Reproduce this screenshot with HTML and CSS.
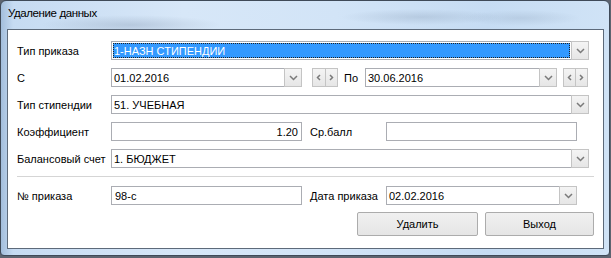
FILE: index.html
```html
<!DOCTYPE html>
<html lang="ru">
<head>
  <meta charset="UTF-8">
  <title>Удаление данных</title>
  <link rel="stylesheet" href="styles.css">
</head>
<body>
  <div class="window">
    <div class="caption">Удаление данных</div>
    <div class="client">
      <div class="row">
        <span class="lbl">Тип приказа</span>
        <div class="combo full focused">
          <span class="value"><span class="sel">1-НАЗН СТИПЕНДИИ</span></span>
          <span class="drop"><svg width="9" height="6" viewBox="0 0 9 6"><polyline points="1,1 4.5,4.5 8,1" /></svg></span>
        </div>
      </div>

      <div class="row">
        <span class="lbl">С</span>
        <div class="combo half">
          <span class="value">01.02.2016</span>
          <span class="drop"><svg width="9" height="6" viewBox="0 0 9 6"><polyline points="1,1 4.5,4.5 8,1" /></svg></span>
        </div>
        <div class="spin first">
          <span class="arr"><svg width="5" height="7" viewBox="0 0 5 7"><polyline points="4,1 1.5,3.5 4,6" /></svg></span>
          <span class="arr"><svg width="5" height="7" viewBox="0 0 5 7"><polyline points="1,1 3.5,3.5 1,6" /></svg></span>
        </div>
        <span class="lbl-po">По</span>
        <div class="combo half2">
          <span class="value">30.06.2016</span>
          <span class="drop"><svg width="9" height="6" viewBox="0 0 9 6"><polyline points="1,1 4.5,4.5 8,1" /></svg></span>
        </div>
        <div class="spin second">
          <span class="arr"><svg width="5" height="7" viewBox="0 0 5 7"><polyline points="4,1 1.5,3.5 4,6" /></svg></span>
          <span class="arr"><svg width="5" height="7" viewBox="0 0 5 7"><polyline points="1,1 3.5,3.5 1,6" /></svg></span>
        </div>
      </div>

      <div class="row">
        <span class="lbl">Тип стипендии</span>
        <div class="combo full">
          <span class="value">51. УЧЕБНАЯ</span>
          <span class="drop"><svg width="9" height="6" viewBox="0 0 9 6"><polyline points="1,1 4.5,4.5 8,1" /></svg></span>
        </div>
      </div>

      <div class="row">
        <span class="lbl">Коэффициент</span>
        <div class="text half right">1.20</div>
        <span class="lbl-mid">Ср.балл</span>
        <div class="text half"></div>
      </div>

      <div class="row">
        <span class="lbl">Балансовый счет</span>
        <div class="combo full">
          <span class="value">1. БЮДЖЕТ</span>
          <span class="drop"><svg width="9" height="6" viewBox="0 0 9 6"><polyline points="1,1 4.5,4.5 8,1" /></svg></span>
        </div>
      </div>

      <div class="sep"></div>

      <div class="row">
        <span class="lbl">№ приказа</span>
        <div class="text half">98-с</div>
        <span class="lbl-mid">Дата приказа</span>
        <div class="combo half">
          <span class="value">02.02.2016</span>
          <span class="drop"><svg width="9" height="6" viewBox="0 0 9 6"><polyline points="1,1 4.5,4.5 8,1" /></svg></span>
        </div>
      </div>

      <div class="actions">
        <button class="btn del">Удалить</button>
        <button class="btn quit">Выход</button>
      </div>
    </div>
  </div>
</body>
</html>
```

FILE: styles.css
```css
body {
  margin: 0;
  width: 611px;
  height: 258px;
  overflow: hidden;
  background: #5d6470;
  font-family: 'Liberation Sans', Arial, sans-serif;
  font-size: 11px;
  color: #000;
}

.window {
  box-sizing: border-box;
  width: 610px;
  height: 256px;
  padding: 0 6px 0 6px;
  border: 1px solid #3f4a58;
  border-radius: 6px 6px 4px 4px;
  background:
    radial-gradient(ellipse 90px 10px at 130px 24px, rgba(120, 140, 165, 0.3), transparent),
    radial-gradient(ellipse 80px 8px at 420px 16px, rgba(120, 140, 165, 0.25), transparent),
    radial-gradient(ellipse 60px 8px at 520px 17px, rgba(120, 140, 165, 0.2), transparent),
    linear-gradient(to right, #a3bedc 0, #c6dbf2 2%, #d7e7f8 30%, #d2e4f7 55%, #c6dcf3 80%, #d0e3f6 100%);
}

.caption {
  height: 28px;
  line-height: 25px;
  padding-left: 1px;
  font-family: 'Liberation Sans', Arial, sans-serif;
  font-size: 11.5px;
  letter-spacing: -0.4px;
  color: #000;
}

.client {
  box-sizing: border-box;
  width: 597px;
  height: 220px;
  background: #fff;
  border: 1px solid #5d6a7a;
  padding: 11px 9px 0 9px;
}

.row {
  display: flex;
  align-items: center;
  height: 19px;
  margin-bottom: 8px;
  white-space: nowrap;
}

.lbl {
  width: 94px;
  flex: none;
}

.lbl-mid {
  width: 76px;
  flex: none;
  margin-left: 8px;
}

.lbl-po {
  width: 21px;
  flex: none;
  margin-left: 6px;
}

.combo,
.text {
  box-sizing: border-box;
  height: 19px;
  border: 1px solid #abadb3;
  background: #fff;
  display: flex;
  align-items: stretch;
  flex: none;
}

.full { width: 478px; }
.half { width: 191px; }
.half2 { width: 192px; }

.text {
  align-items: center;
  padding: 0 3px;
}

.text.right {
  justify-content: flex-end;
}

.value {
  flex: 1;
  display: flex;
  align-items: center;
  padding-left: 2px;
  overflow: hidden;
}

.focused .value {
  padding: 1px;
}

.sel {
  display: flex;
  align-items: center;
  width: 100%;
  height: 100%;
  box-sizing: border-box;
  padding-left: 1px;
  background: #3399ff;
  color: #fff;
  outline: 1px dotted #222;
  outline-offset: -1px;
}

.drop {
  width: 16px;
  flex: none;
  margin: -1px -1px -1px 0;
  border: 1px solid #c4c4c4;
  background: linear-gradient(#f4f4f4, #e6e6e6);
  display: flex;
  align-items: center;
  justify-content: center;
}

.drop polyline,
.arr polyline {
  fill: none;
  stroke: #7a7a7a;
  stroke-width: 1.5;
}

.spin {
  display: flex;
  height: 19px;
  flex: none;
  box-sizing: border-box;
  border: 1px solid #c4c4c4;
  background: linear-gradient(#f4f4f4, #e6e6e6);
}

.spin.first { margin-left: 10px; width: 26px; }
.spin.second { margin-left: 6px; width: 25px; }

.arr {
  flex: 1;
  display: flex;
  align-items: center;
  justify-content: center;
}

.arr + .arr {
  border-left: 1px solid #c4c4c4;
}

.sep {
  height: 1px;
  background: #d5d5d5;
  margin: 2px 0 9px 0;
}

.actions {
  display: flex;
  justify-content: flex-end;
  gap: 7px;
  margin-top: -1px;
}

.btn {
  height: 24px;
  font-family: 'Liberation Sans', Arial, sans-serif;
  font-size: 11px;
  color: #000;
  border: 1px solid #acacac;
  border-radius: 2px;
  background: linear-gradient(#f0f0f0, #e5e5e5);
  padding: 0;
}

.del { width: 121px; }
.quit { width: 109px; }
```
